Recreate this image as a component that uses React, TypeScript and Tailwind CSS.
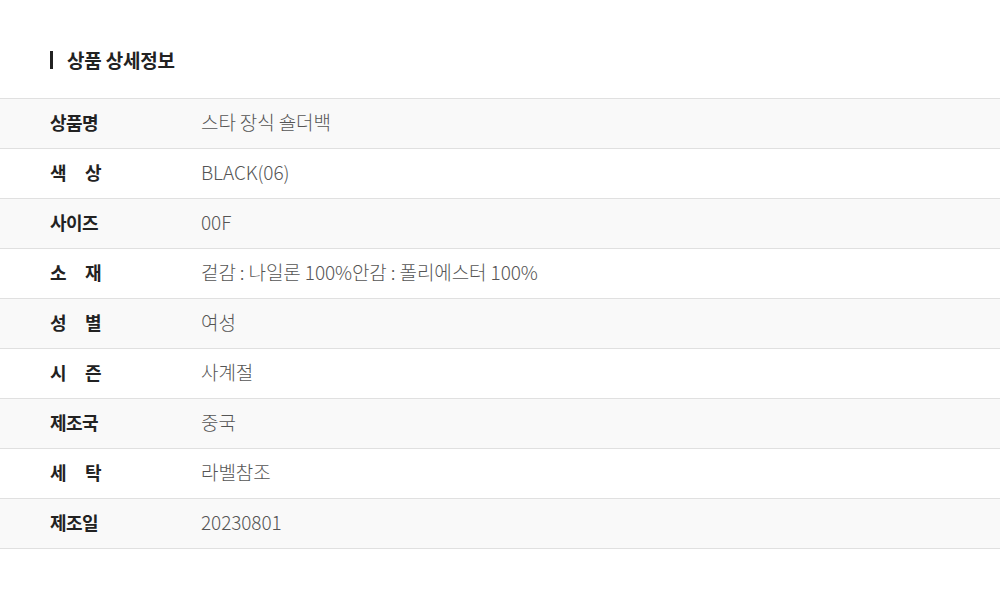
const rows: { label: string[]; value: string }[] = [
  { label: ["상품명"], value: "스타 장식 숄더백" },
  { label: ["색", "상"], value: "BLACK(06)" },
  { label: ["사이즈"], value: "00F" },
  { label: ["소", "재"], value: "겉감 : 나일론 100%안감 : 폴리에스터 100%" },
  { label: ["성", "별"], value: "여성" },
  { label: ["시", "즌"], value: "사계절" },
  { label: ["제조국"], value: "중국" },
  { label: ["세", "탁"], value: "라벨참조" },
  { label: ["제조일"], value: "20230801" },
];

export default function App() {
  return (
    <div className="h-[598px] w-[1000px] bg-white font-['Noto_Sans_CJK_KR','Noto_Sans',sans-serif]">
      <div className="flex h-[98px] items-start pl-[50px] pt-[51px]">
        <span className="h-[18px] w-[3px] bg-[#222]" />
        <h2 className="ml-[14px] text-[19px] font-bold leading-[18px] tracking-[-0.2px] text-[#222]">
          상품 상세정보
        </h2>
      </div>
      <div className="border-t border-[#e0e0e0]">
        {rows.map((row, i) => (
          <div
            key={i}
            className={`flex h-[50px] items-center border-b border-[#e0e0e0] pb-[3px] pl-[50px] ${
              i % 2 === 0 ? "bg-[#f9f9f9]" : "bg-white"
            }`}
          >
            <div className="flex w-[51px] justify-between text-[18px] font-bold tracking-[-0.5px] text-[#222]">
              {row.label.map((c) => (
                <span key={c}>{c}</span>
              ))}
            </div>
            <div className="ml-[100px] text-[19px] font-light tracking-[-0.1px] text-[#555]">
              {row.value}
            </div>
          </div>
        ))}
      </div>
    </div>
  );
}
